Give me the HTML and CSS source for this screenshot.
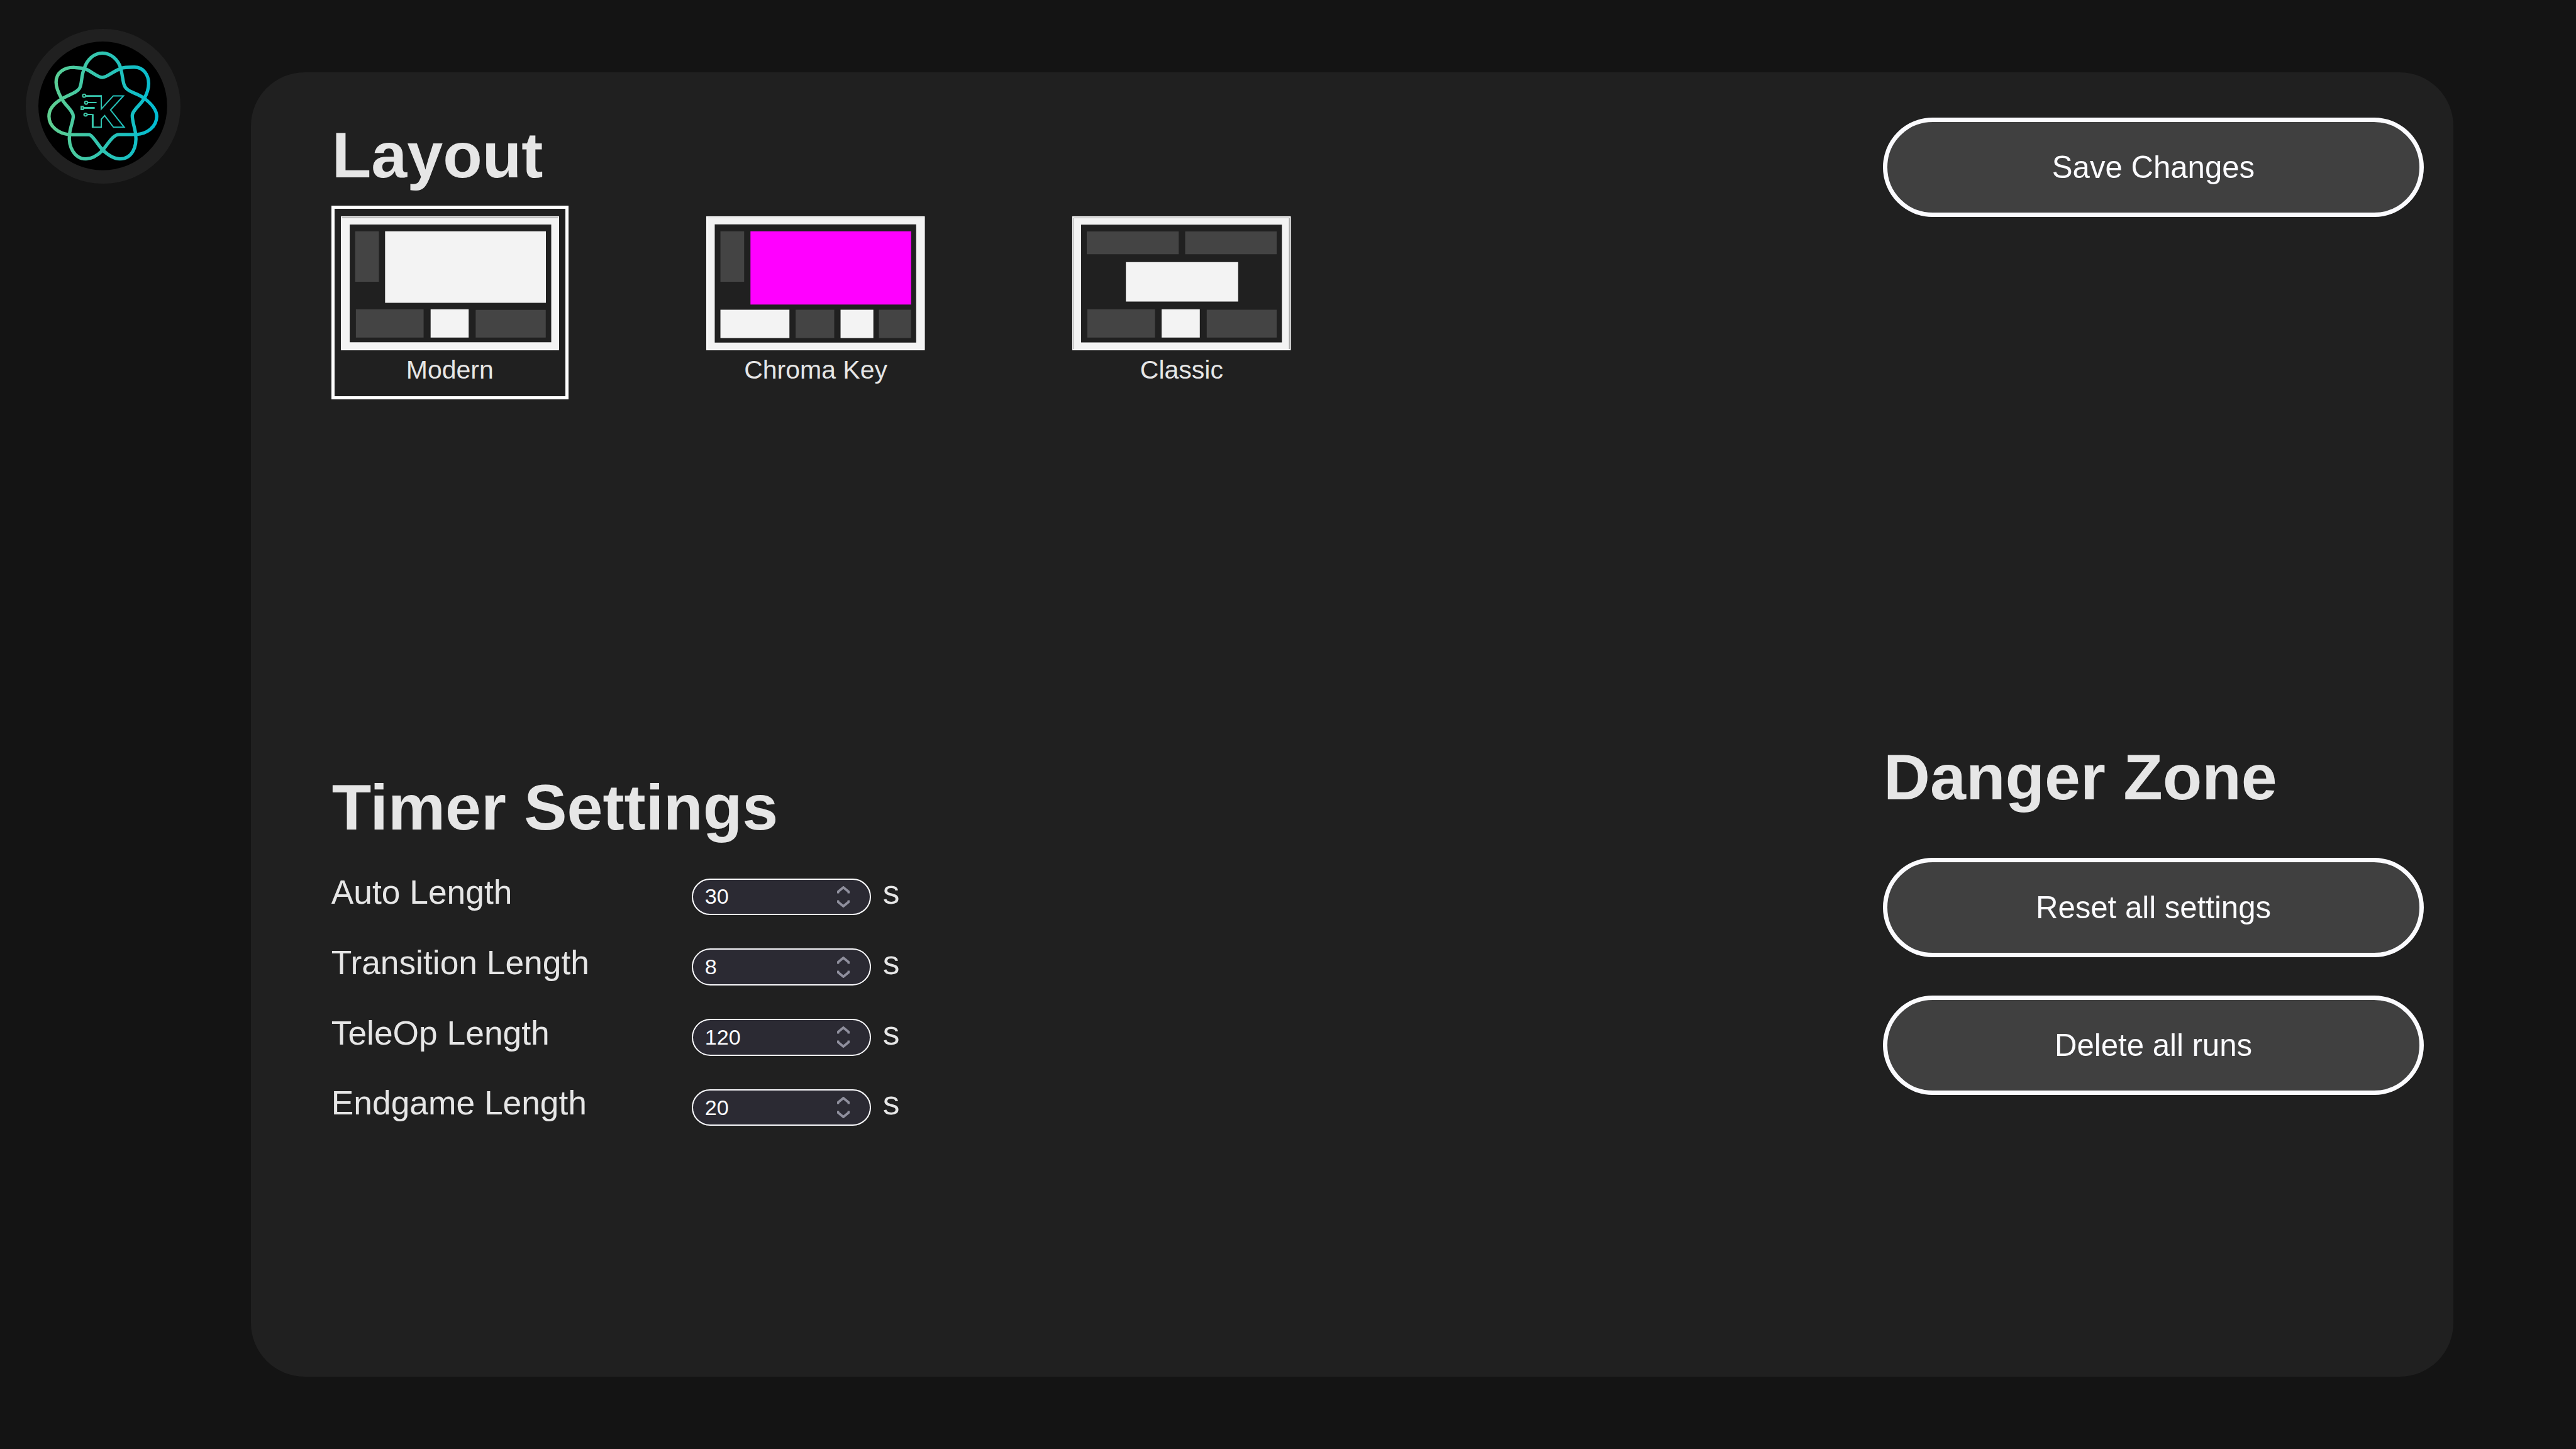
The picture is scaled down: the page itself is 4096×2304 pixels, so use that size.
FILE: index.html
```
<!DOCTYPE html>
<html lang="en">
<head>
<meta charset="utf-8">
<title>Settings</title>
<link rel="stylesheet" href="styles.css">
</head>
<body>
<div class="logo">
  <svg class="logo-art" viewBox="168 162 960 960" aria-hidden="true">
    <defs>
      <linearGradient id="brand" gradientUnits="userSpaceOnUse" x1="236" y1="0" x2="1060" y2="0">
        <stop offset="0" stop-color="#61d090"/>
        <stop offset=".5" stop-color="#2fc4b2"/>
        <stop offset="1" stop-color="#00bbd3"/>
      </linearGradient>
    </defs>
    <circle cx="648" cy="642" r="480"/>
    <g fill="none" stroke="url(#brand)">
      <path stroke-width="25" stroke-linejoin="round" d="M645 248C710 248 765 300 782 363C797 420 797 460 808 487C820 520 850 532 880 545C915 560 940 572 957 585C1010 625 1050 670 1050 720C1050 800 975 850 897 855H770C730 855 700 905 648 972C605 1015 560 1037 520 1037C440 1037 390 950 400 855C405 800 428 755 428 720C428 680 375 645 342 590C315 540 300 505 300 465C300 390 365 355 430 355C460 360 485 358 510 363C560 380 610 430 645 430C680 430 730 380 782 363C810 352 850 353 885 353C950 353 990 410 990 475C990 515 978 550 957 587C930 635 868 675 868 715C868 755 885 800 893 850C905 950 865 1037 775 1037C735 1037 695 1015 648 972C600 915 575 865 547 856H400C320 850 247 795 247 720C247 665 290 620 342 590C400 555 455 545 475 510C495 475 485 420 510 363C530 300 580 248 645 248Z"/>
      <g stroke-width="9.500">
        <path d="M637 561V665L726 567H802L706 672L808 801H728L662 714L637 741V801H573"/>
        <circle cx="509" cy="566" r="11"/>
        <circle cx="524" cy="618" r="11"/>
        <path d="M487 646H502V668H487ZM536 617H602M534 706H573"/>
        <ellipse cx="520" cy="707" rx="12" ry="10"/>
      </g>
      <path stroke-width="14" d="M522 568H637M503 657H588M573 703V805"/>
    </g>
  </svg>
</div>

<main class="panel">
  <section class="col-main">
    <div class="layouts">
      <h1 class="title">Layout</h1>
      <div class="choices">
        <div class="choice selected">
          <svg class="thumb" viewBox="111 545 1310 705" preserveAspectRatio="none">
            <path fill="#fff" d="M111 545H1421V1250H111Z"/>
            <path fill="#f3f3f3" d="M118 551H1414V1244H118Z"/>
            <path fill="#555" d="M118 550.500H1414V553.500H118Z"/>
            <path fill="#202020" d="M164 588H1372V1208H164Z"/>
            <path fill="#444" d="M197 624H339V889H197ZM201 1034H607V1183H201ZM919 1037H1339V1183H919Z"/>
            <path fill="#f3f3f3" d="M376 624H1340V1000H376ZM649 1034H877V1183H649Z"/>
          </svg>
          <span class="name">Modern</span>
        </div>
        <div class="choice">
          <svg class="thumb" viewBox="65 111 1419 999" preserveAspectRatio="none">
            <path fill="#fff" d="M65 111H1484V1110H65Z"/>
            <path fill="#f3f3f3" d="M73 120H1477V1101H73Z"/>
            <path fill="#999" d="M73 120H1477V123H73Z"/>
            <path fill="#202020" d="M120 171H1428V1052H120Z"/>
            <path fill="#444" d="M157 222H311V599H157ZM645 807H896V1018H645ZM1186 807H1394V1018H1186Z"/>
            <path fill="#f3f3f3" d="M157 807H605V1018H157ZM937 807H1150V1018H937Z"/>
            <path fill="#f0f" d="M352 222H1395V769H352Z"/>
          </svg>
          <span class="name">Chroma Key</span>
        </div>
        <div class="choice">
          <svg class="thumb" viewBox="89 111 1419 999" preserveAspectRatio="none">
            <path fill="#fff" d="M89 111H1508V1110H89Z"/>
            <path fill="#666" d="M97 120H1500V1101H97Z"/>
            <path fill="#f3f3f3" d="M100 124H1496.500V1101H100Z"/>
            <path fill="#202020" d="M146 173H1450V1051H146Z"/>
            <path fill="#444" d="M183 223H780V394H183ZM822 223H1416V394H822ZM187 804H626V1015H187ZM962 808H1416V1015H962Z"/>
            <path fill="#f3f3f3" d="M437 452H1166V747H437ZM669 804H917V1015H669Z"/>
          </svg>
          <span class="name">Classic</span>
        </div>
      </div>
    </div>

    <div class="timers">
      <h1 class="title">Timer Settings</h1>
      <div class="row">
        <span class="label">Auto Length</span>
        <span class="field">30<svg class="spin" viewBox="0 0 20 34"><path d="M1.5 11.5V9L10 2L18.500 9V11.500M1.500 22.500V25L10 32L18.500 25V22.500"/></svg></span>
        <span class="unit">s</span>
      </div>
      <div class="row">
        <span class="label">Transition Length</span>
        <span class="field">8<svg class="spin" viewBox="0 0 20 34"><path d="M1.5 11.5V9L10 2L18.500 9V11.500M1.500 22.500V25L10 32L18.500 25V22.500"/></svg></span>
        <span class="unit">s</span>
      </div>
      <div class="row">
        <span class="label">TeleOp Length</span>
        <span class="field">120<svg class="spin" viewBox="0 0 20 34"><path d="M1.5 11.5V9L10 2L18.500 9V11.500M1.500 22.500V25L10 32L18.500 25V22.500"/></svg></span>
        <span class="unit">s</span>
      </div>
      <div class="row">
        <span class="label">Endgame Length</span>
        <span class="field">20<svg class="spin" viewBox="0 0 20 34"><path d="M1.5 11.5V9L10 2L18.500 9V11.500M1.500 22.500V25L10 32L18.500 25V22.500"/></svg></span>
        <span class="unit">s</span>
      </div>
    </div>
  </section>

  <aside class="col-side">
    <button class="button" type="button">Save Changes</button>
    <div class="danger">
      <h1 class="title">Danger Zone</h1>
      <button class="button" type="button">Reset all settings</button>
      <button class="button" type="button">Delete all runs</button>
    </div>
  </aside>
</main>
</body>
</html>
```
FILE: styles.css
```
* {
  box-sizing: border-box;
}

body {
  margin: 0;
  width: 4096px;
  height: 2304px;
  display: flex;
  align-items: flex-start;
  overflow: hidden;
  background: #141414;
  color: #e6e6e6;
  font-family: Arial, "Liberation Sans", sans-serif;
}

.logo {
  flex: none;
  width: 245.6px;
  height: 245.6px;
  margin: 46px 112.8px 0 41px;
  padding: 20.4px;
  border-radius: 50%;
  background: #202020;
}

.logo-art {
  display: block;
  width: 100%;
  height: 100%;
}

.panel {
  flex: none;
  display: flex;
  justify-content: space-between;
  width: 3502px;
  height: 2073.6px;
  margin-top: 115.2px;
  padding: 0 47.4px 0 127.4px;
  border-radius: 85.3px;
  background: #202020;
}

.title {
  margin: 0 0 0 1px;
  font-size: 102.4px;
  line-height: 118px;
  font-weight: bold;
}

.layouts {
  height: 1036px;
  padding-top: 73px;
}

.choices {
  display: grid;
  grid-template-columns: repeat(3, 581.8px);
  margin-top: 21px;
}

.choice {
  display: flex;
  flex-direction: column;
  align-items: center;
  width: 377px;
  height: 308px;
  padding-top: 12px;
  border: 5px solid transparent;
}

.choice.selected {
  border-color: #fff;
}

.thumb {
  width: 347.5px;
  height: 213px;
}

.name {
  margin-top: 7px;
  font-size: 41px;
  line-height: 48px;
}

.timers {
  display: flex;
  flex-direction: column;
  padding-top: 74px;
}

.timers .title {
  margin-bottom: 20px;
}

.row {
  display: flex;
  align-items: center;
  height: 111.8px;
}

.label {
  width: 573px;
  font-size: 53.33px;
  line-height: 60px;
}

.field {
  display: flex;
  align-items: center;
  justify-content: space-between;
  width: 285.4px;
  height: 58.4px;
  margin-top: 13.5px;
  padding: 0 32px 0 19px;
  border: 2px solid #fbfbfe;
  border-radius: 30px;
  background: #2b2a33;
  color: #fbfbfe;
  font-size: 34.13px;
}

.spin {
  width: 20px;
  height: 34px;
  fill: none;
  stroke: #8f8f9d;
  stroke-width: 3.8;
}

.unit {
  margin-left: 18.7px;
  font-size: 53.33px;
  line-height: 60px;
}

.col-side {
  width: 860px;
  padding-top: 72px;
}

.button {
  display: block;
  width: 860px;
  height: 158px;
  padding: 0;
  border: 7px solid #fbfbfe;
  border-radius: 79px;
  background: #404040;
  color: #fbfbfe;
  font-family: inherit;
  font-size: 49.15px;
}

.danger {
  display: flex;
  flex-direction: column;
  margin-top: 832px;
}

.danger .title {
  margin-bottom: 68.4px;
}

.danger .button + .button {
  margin-top: 61.2px;
}
```
